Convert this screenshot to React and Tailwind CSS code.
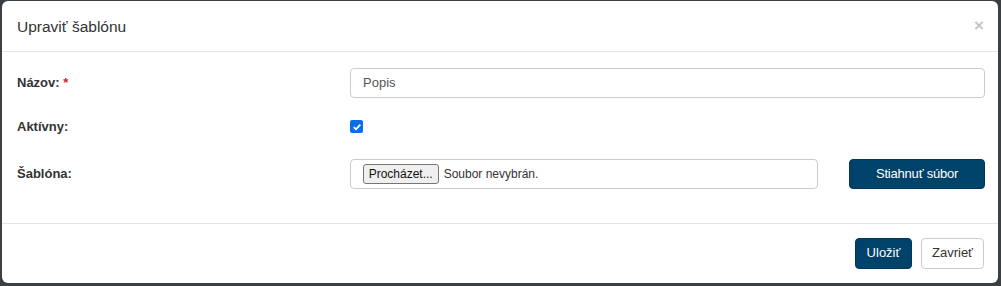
import React from 'react';

function App() {
  return (
    <div className="w-[1001px] h-[286px] bg-[#3a3f44] pt-[1px] pl-[2px] overflow-hidden" style={{ fontFamily: '"Liberation Sans", Arial, sans-serif' }}>
      <div className="w-[996px] h-[282px] bg-white rounded-[6px] flex flex-col text-[#333]">
        {/* header */}
        <div className="h-[51px] border-b border-[#e5e5e5] flex items-center justify-between pl-[15px] pr-[14px]">
          <h4 className="text-[15.5px] text-[#333] mt-[1px]">Upraviť šablónu</h4>
          <span className="text-[#c4c4c4] text-[17px] font-bold leading-none mb-[2px]">×</span>
        </div>

        {/* body */}
        <div className="flex-1 pl-[15px] pr-[13px] pt-[16px]">
          <div className="flex items-center h-[30px]">
            <label className="w-[333px] text-[13px] font-bold">
              Názov: <span className="text-[#e02020]">*</span>
            </label>
            <div className="flex-1 h-[30px] border border-[#ccc] rounded-[4px] flex items-center px-[12px] text-[13px] text-[#555]">
              Popis
            </div>
          </div>

          <div className="flex items-start mt-[19px] h-[34px]">
            <label className="w-[333px] text-[13px] font-bold">Aktívny:</label>
            <div className="mt-[3px] w-[13px] h-[13px] rounded-[2px] bg-[#0b6ee6] flex items-center justify-center">
              <svg width="10" height="10" viewBox="0 0 10 10">
                <path d="M1.8 5.2 L4 7.3 L8.3 2.6" fill="none" stroke="white" strokeWidth="1.8" />
              </svg>
            </div>
          </div>

          <div className="flex items-center mt-[8px] h-[30px]">
            <label className="w-[333px] text-[13px] font-bold">Šablóna:</label>
            <div className="w-[469px] h-[30px] border border-[#ccc] rounded-[4px] flex items-center px-[12px] text-[12px] text-[#333]">
              <span className="h-[20px] w-[76px] bg-[#efefef] border border-[#767676] rounded-[3px] flex items-center justify-center text-[#111]">
                Procházet...
              </span>
              <span className="ml-[5px]">Soubor nevybrán.</span>
            </div>
            <button className="ml-[31px] w-[136px] h-[30px] bg-[#00436a] rounded-[4px] text-white text-[13px] tracking-[-0.2px] border border-[#00375a]">
              Stiahnuť súbor
            </button>
          </div>
        </div>

        {/* footer */}
        <div className="h-[60px] border-t border-[#e5e5e5] flex items-center justify-end pr-[14px] gap-[9px] pt-[1px] pb-[2px]">
          <button className="w-[57px] h-[31px] bg-[#00436a] rounded-[4px] text-white text-[13px] border border-[#00375a]">
            Uložiť
          </button>
          <button className="w-[63px] h-[31px] bg-white rounded-[4px] text-[#333] text-[13px] border border-[#ccc]">
            Zavrieť
          </button>
        </div>
      </div>
    </div>
  );
}

export default App;
